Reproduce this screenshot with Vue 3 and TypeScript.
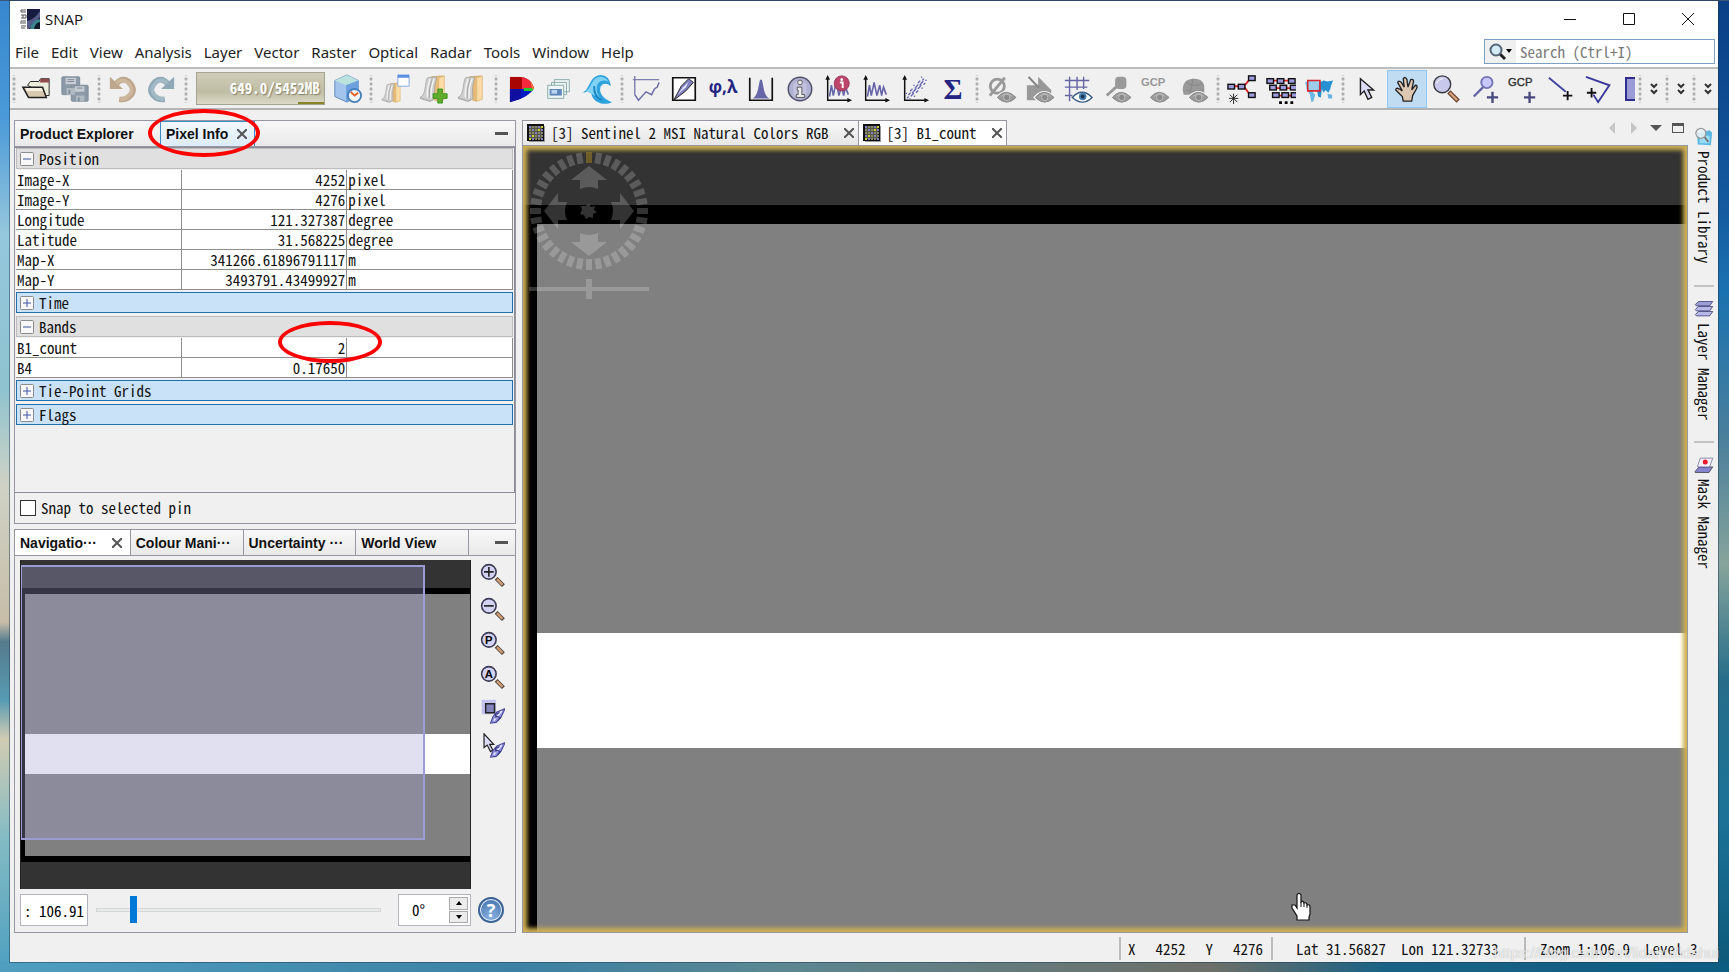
<script setup lang="ts">
import { ref } from 'vue'

const menus = ['File', 'Edit', 'View', 'Analysis', 'Layer', 'Vector', 'Raster', 'Optical', 'Radar', 'Tools', 'Window', 'Help']

const eye = '<path d="M10 25Q20 13 32 25Q21 37 10 25Z" fill="#999" stroke="#f0f0f0" stroke-width="2"/><path d="M11 25Q20 14 31 25Q21 35 11 25Z" fill="#999" stroke="#8c8c8c"/><path d="M15 24Q21 18 27 24" fill="none" stroke="#bbb"/><circle cx="21" cy="25" r="3.400" fill="#8a8a8a" stroke="#c0c0c0"/>'
const axes = '<path d="M5 4V28H28" fill="none" stroke="#111" stroke-width="1.600"/><path d="M2.500 6L5 1l2.500 5zM26 25.500l5 2.500-5 2.500z" fill="#111"/>'
const spectrum = '<path d="M7 24L9 12l2 11 3-14 3 14 3-11 2 11 2-9 3 8" fill="none" stroke="#6565a8" stroke-width="1.700"/>'
const folder = '<path d="M13 3l13-1v25l-6 2-7-3z" fill="#e6bb7a" stroke="#cfa25c" stroke-width=".8"/><path d="M21 4l6-2v25l-6 2z" fill="#fbdca6" stroke="#dbb06c" stroke-width=".7"/><path d="M1 25C8 23 6 8 9 4l10-1q-4 11-2 23l-5 3z" fill="#cfcfcf" stroke="#9c9c9c" stroke-width=".7"/><path d="M9 25q-1-9 3-20M13 26q-1-10 3-21" stroke="#f2f2f2" stroke-width="1.500" fill="none"/><path d="M11 26q-1-10 3-21" stroke="#999" stroke-width=".8" fill="none"/><path d="M1 26l10 3 4-1" stroke="#a8a8a8" fill="none"/>'
const lens = '<path d="M19 19l10 10" stroke="#6b432e" stroke-width="5"/><path d="M20 20l8 8" stroke="#d7a27a" stroke-width="2.500"/><circle cx="12" cy="11" r="9" fill="#c7c8ec" stroke="#393943" stroke-width="1.500"/><path d="M6 10q2-5 7-5" stroke="#fff" fill="none"/>'
const node = (x: number, y: number) => `<rect x="${x}" y="${y}" width="7" height="5" fill="#9d9de0" stroke="#111" stroke-width="1.500"/>`
const arrow = '<path d="M9 5v17l4-4 4 9 4-2-4-8h6z" fill="#dcdcf8" stroke="#222" stroke-width="1.500"/>'

const dots = Array.from({ length: 50 }, (_, i) => {
  const t = i / 50
  return `<rect x="${8 + t * 17 + ((i * 7) % 6) - 2}" y="${23 - t * 18 + ((i * 5) % 8) - 3}" width="1.400" height="1.400"/>`
}).join('')

const icons: Record<string, string> = {
  open: '<path d="M7 12l3-4h9l2-3h9v18h-4z" fill="#ececdc" stroke="#222"/><path d="M21 5h9v4H20z" fill="#914b4d"/><path d="M2 14h21l4 11H8z" fill="#d8c8b0" stroke="#222" stroke-width="1.600"/><path d="M5 15h17l1 3H6z" fill="#f6efe2"/>',
  save: '<g fill="#8c99a7" stroke="#7e8c9a"><rect x="2" y="3" width="19" height="19" rx="1"/><rect x="12" y="12" width="18" height="17" rx="1"/></g><path d="M6 4h11v7H6zM16 13h10v6H16z" fill="#c6ccd1"/><path d="M7 15h9v7H7zM17 23h9v6h-9z" fill="#b0bac3"/><path d="M8 6h7M8 8h7M18 15h6" stroke="#7e8b98"/><path d="M9 17h2v4H9zM19 25h2v4h-2z" fill="#7e8b98"/>',
  undo: '<path d="M8 11Q15 3 22 8q9 9 1 16-4 4-11 3" fill="none" stroke="#bda68b" stroke-width="6"/><path d="M2 3l14 13H2z" fill="#bda68b"/><path d="M9 10Q15 4 21 9q8 8 1 14-4 4-9 4" fill="none" stroke="#ccb69c" stroke-width="4"/>',
  redo: '<path d="M24 11Q17 3 10 8q-9 9-1 16 4 4 11 3" fill="none" stroke="#8fa8b6" stroke-width="6"/><path d="M30 3L16 16h14z" fill="#8fa8b6"/><path d="M23 10Q17 4 11 9q-8 8-1 14 4 4 9 4" fill="none" stroke="#a3bac6" stroke-width="4"/>',
  cube: '<path d="M3 7L16 1l12 6v16l-12 7L3 24z" fill="#a3c4ec" stroke="#5d89bd"/><path d="M3 7l12 5 13-5L16 1z" fill="#bbe2df"/><path d="M15 12v18l13-7V7z" fill="#6da0dc"/><circle cx="24" cy="23" r="7" fill="#f2f5fa" stroke="#457fbd" stroke-width="2"/><path d="M20 19l4 4 4-3" fill="none" stroke="#e66127" stroke-width="2"/>',
  folderWin: `<g transform="translate(1 8) scale(.76)">${folder}</g>` + '<path d="M19 1h12v12H19z" fill="#fff" stroke="#85a9df"/><path d="M19 1h12v3H19z" fill="#5c8fe0"/>',
  folderAdd: folder + '<path d="M20 16h5v5h5v5h-5v5h-5v-5h-5v-5h5z" fill="#5fad2c" stroke="#3f9420"/>',
  folder,
  color: '<clipPath id="dome"><path d="M4 3h10q13 1 16 12Q25 25 4 30z"/></clipPath><g clip-path="url(#dome)"><path d="M0 0h32v16H0z" fill="#a90505"/><path d="M17 0h15v16H17z" fill="#f5283c"/><path d="M0 16h32v18H0z" fill="#0818c5"/><path d="M19 15h13v3H19z" fill="#25c72f"/><path d="M25 5h7v11h-4z" fill="#ef7a3b"/><path d="M0 16h16v14H0z" fill="#1010a0"/></g>',
  stack: '<g fill="#edf5f5" stroke="#86aaa8"><path d="M11 6h16v13H11zM8 9h16v13H8z"/><path d="M4 12h17v14H4z"/></g><path d="M6 16h13v7H6z" fill="#5f86bd"/><path d="M8 17h6v4H8z" fill="#b9d5ef"/>',
  wave: '<path d="M0 20C9 17 7 2 20 1q9 0 11 12-7-5-11 0c-3 8 4 14 12 17-6 3-12 2-17-1C9 25 9 18 11 12q-3 8-11 8z" fill="#2ea2dd"/><path d="M4 18C12 14 9 3 21 3q5 1 7 5-7-3-11 2c-3 6-1 11 3 16" fill="#7fd2f3"/><path d="M13 13q-1 10 8 15" fill="none" stroke="#1784c6" stroke-width="2"/>',
  profile: '<path d="M4 2v20M2 6h28" stroke="#8080b0" stroke-width="1.500"/><path d="M4 22l4 6 8-9 6 3 3-6 3-2 2-5" fill="none" stroke="#6d6da8" stroke-width="1.600"/>',
  pen: '<path d="M4 4h24v24H4z" fill="#fff" stroke="#111" stroke-width="1.800"/><path d="M5 28l8-15 8-8 5 4-8 9z" fill="#7f7fbd" stroke="#222"/><path d="M9 22l9-8 3-6-6 6z" fill="#e5e5fc"/>',
  phi: '<text x="16" y="20" text-anchor="middle" font-family="Open Sans" font-weight="700" font-size="18" fill="#242482">φ,λ</text>',
  hist: '<path d="M4 4v24h24V4" fill="none" stroke="#111" stroke-width="1.800"/><path d="M7 26c6-3 6-13 8-20h2c2 8 2 17 8 20z" fill="#6666a8"/>',
  info: '<circle cx="16" cy="16" r="12.500" fill="#b1b1d3" stroke="#50506c" stroke-width="1.600"/><path d="M9 24V10q7-5 14 1v12" fill="#c9c9e4" opacity=".7"/><circle cx="16" cy="9" r="2.500" fill="#eee" stroke="#555"/><path d="M13 14h5v8h3v3h-9v-3h2v-5h-1z" fill="#eee" stroke="#555"/>',
  pinSpectrum: axes + spectrum + '<circle cx="20" cy="10" r="8" fill="#bd456b" stroke="#943555"/><circle cx="20" cy="6" r="1.500" fill="#fff"/><path d="M18 9h3v6" stroke="#fff" stroke-width="2" fill="none"/>',
  spectrum: axes + spectrum,
  scatter: axes + `<g fill="#6565b0">${dots}</g>`,
  sigma: '<text x="16" y="27" text-anchor="middle" font-family="Liberation Serif" font-weight="700" font-size="31" fill="#242482">Σ</text>',
  eyeNone: '<circle cx="11" cy="13" r="7.500" fill="none" stroke="#999" stroke-width="3"/><path d="M3 23L19 4" stroke="#999" stroke-width="3"/>' + eye,
  eyeShape: '<path d="M4 3l10 9V3l14 14v11H2V12h9L3 4z" fill="#999"/><path d="M4 3l11 12" stroke="#888" stroke-width="2"/>' + eye,
  eyeGrid: '<path d="M7 3v26M15 3v14M22 3v13M2 7h26M2 14h24M2 23h8" stroke="#6666a5" stroke-width="1.500"/><path d="M10 25Q20 14 31 25 21 35 10 25Z" fill="#fff" stroke="#3d5d83" stroke-width="1.500"/><circle cx="21" cy="24" r="4" fill="#477eb1"/><circle cx="21" cy="24" r="2" fill="#16324c"/>',
  eyePin: '<rect x="14" y="3" width="12" height="13" rx="4" fill="#999"/><path d="M15 14L5 23" stroke="#999" stroke-width="3"/>' + eye,
  eyeGcp: '<text x="14" y="13" text-anchor="middle" font-family="Liberation Sans" font-weight="700" font-size="12" fill="#999">GCP</text>' + eye,
  eyeWorld: '<path d="M4 17Q4 5 16 5T27 17v5H5z" fill="#999"/><path d="M8 9q8 6 17 1M8 17q9 4 18 0M15 5l-3 15" stroke="#888" fill="none"/>' + eye,
  graph: '<path d="M5 13h13M18 13l7-8M18 13l7 10" stroke="#da2424" stroke-width="2" fill="none"/>' + node(1, 11) + node(12, 11) + node(23, 2) + node(23, 20) + '<path d="M7 21v11M2 26h10M3 22l8 8M11 22l-8 8" stroke="#222"/>',
  batch: '<path d="M3 7h25M5 15h25M8 23h23" stroke="#dd2323" stroke-width="2"/>' + node(1, 5) + node(12, 5) + node(24, 5) + node(4, 12) + node(15, 12) + node(26, 12) + node(7, 20) + node(17, 20) + node(27, 20) + '<path d="M14 29h3v3h-3zm6 0h3v3h-3zm6 0h3v3h-3z"/>',
  world: '<path d="M1 9l8-3 7 3 2 3-5 5-4 2 3 3-2 7-2 1-2-9-3-4-1-6z" fill="#6db9e6"/><path d="M16 9l5-2 4 1 6-1-2 5-1 4-2 4-3-3-2 3-2-4-1 9-3-1-1-7z" fill="#2590d2"/><path d="M25 21l5 1v4h-4z" fill="#67b5e2"/><path d="M4 7h13v11H4z" fill="#b1d7ed" fill-opacity=".7" stroke="#d62632" stroke-width="1.700"/>',
  select: arrow,
  hand: '<path d="M12 29l-1-5-7-7q0-3 4-1l3 2-5-9q1-3 4 0l3 5-1-9q2-3 4 1l1 8 3-8q3-1 3 2l-2 9 4-5q3 0 1 4l-4 7-1 6z" fill="#ddc7b3" stroke="#222" stroke-width="1.400"/>',
  zoom: lens,
  pin: '<circle cx="18" cy="9" r="6" fill="#c7c7fb" stroke="#7373b7" stroke-width="2"/><path d="M14 14L4 24" stroke="#6464a6" stroke-width="2.500"/><path d="M24 19v12M18 25h12" stroke="#48487f" stroke-width="2.500"/>',
  gcp: '<text x="13" y="13" text-anchor="middle" font-family="Liberation Sans" font-size="12" fill="#333" stroke="#333" stroke-width=".4">GCP</text><path d="M23 19v12M17 25h12" stroke="#48487f" stroke-width="2.500"/>',
  line: '<path d="M2 4l18 15" stroke="#4343a0" stroke-width="2"/><path d="M22 18v10M17 23h10" stroke="#111" stroke-width="2"/>',
  polygon: '<path d="M1 3l25 9-12 18-5-8" fill="none" stroke="#39399b" stroke-width="2"/><path d="M7 15v10M2 20h10" stroke="#111" stroke-width="2"/>',
}

interface Group { items: string[]; memory?: boolean }
const groups: Group[] = [
  { items: ['open', 'save'] },
  { items: ['undo', 'redo'] },
  { items: ['cube'], memory: true },
  { items: ['folderWin', 'folderAdd', 'folder'] },
  { items: ['color', 'stack', 'wave'] },
  { items: ['profile', 'pen', 'phi', 'hist', 'info', 'pinSpectrum', 'spectrum', 'scatter', 'sigma'] },
  { items: ['eyeNone', 'eyeShape', 'eyeGrid', 'eyePin', 'eyeGcp', 'eyeWorld'] },
  { items: ['graph', 'batch', 'world'] },
  { items: ['select', 'hand', 'zoom', 'pin', 'gcp', 'line', 'polygon'] },
]

const sections = [
  { title: 'Position', open: true, rows: [
    ['Image-X', '4252', 'pixel'],
    ['Image-Y', '4276', 'pixel'],
    ['Longitude', '121.327387', 'degree'],
    ['Latitude', '31.568225', 'degree'],
    ['Map-X', '341266.61896791117', 'm'],
    ['Map-Y', '3493791.43499927', 'm'],
  ] },
  { title: 'Time', open: false, rows: [] },
  { title: 'Bands', open: true, rows: [['B1_count', '2', ''], ['B4', '0.17650', '']] },
  { title: 'Tie-Point Grids', open: false, rows: [] },
  { title: 'Flags', open: false, rows: [] },
]

const navTabs = ['Colour Mani···', 'Uncertainty ···', 'World View']
const sync = '<path d="M13 30l3-8 5-6 10-4-5 11-6 6z" fill="#8f8fe0" stroke="#4a4a94" stroke-width="1.300"/><path d="M17 27l10-12" stroke="#e8e8ff" stroke-width="2"/><path d="M19 21l6 2-3 4M24 17l-5 2 1 5" fill="none" stroke="#3a3a86" stroke-width="1.500"/>'
const smallLens = (inner: string) => '<path d="M20 19l9 9" stroke="#4b4038" stroke-width="5"/><path d="M21 20l7 7" stroke="#cf9c75" stroke-width="3"/><circle cx="11" cy="11" r="9" fill="#d3d3f3" stroke="#3c3c55" stroke-width="2"/>' + inner
const navTools = [
  { name: 'Zoom in', art: smallLens('<path d="M11 5v12M5 11h12" stroke="#222" stroke-width="2"/>') },
  { name: 'Zoom out', art: smallLens('<path d="M5 11h12" stroke="#222" stroke-width="2"/>') },
  { name: 'Zoom to actual pixels', art: smallLens('<text x="11" y="16" text-anchor="middle" font-family="Liberation Sans" font-weight="700" font-size="14">P</text>') },
  { name: 'Zoom all', art: smallLens('<text x="11" y="16" text-anchor="middle" font-family="Liberation Sans" font-weight="700" font-size="14">A</text>') },
  { name: 'Synchronise views', art: '<path d="M2 1h18v18H2z" fill="#c3c3ed"/><path d="M7 6h11v11H7z" fill="#8484bd" stroke="#222" stroke-width="1.800"/>' + sync },
  { name: 'Synchronise cursor', art: '<path d="M5 1v17l4-3 4 8 3-2-4-7h5z" fill="#dcdcf8" stroke="#222" stroke-width="1.500"/>' + sync },
]

const sideTabs = [
  { name: 'Product Library', art: '<path d="M5 10l20-5 4 4-2 20-21-1z" fill="#58b6e5"/><path d="M9 14h16v12H9z" fill="#98dbf3"/><path d="M16 15l7 9" stroke="#777" stroke-width="3"/><circle cx="11" cy="10" r="8" fill="#e8f1f5" fill-opacity=".9" stroke="#999" stroke-width="2"/>' },
  { name: 'Layer Manager', art: '<g stroke="#4a4a80" stroke-width="1.400"><path d="M2 25l5-5h23l-5 7H4z" fill="#b8b8e8"/><path d="M2 17l5-5h23l-5 7H4z" fill="#b8b8e8"/><path d="M2 9l5-5h23l-5 7H4z" fill="#9c9cd6"/></g>' },
  { name: 'Mask Manager', art: '<path d="M2 26l6-7h22l-6 9H2z" fill="#8585cf" stroke="#222"/><path d="M6 17l4-12h20l-5 14H6z" fill="#f3f0fc" stroke="#555587"/><circle cx="18" cy="11" r="4" fill="#ed1a2d"/>' },
]

const ticks = Array.from({ length: 36 }, (_, i) => i * 10)
const cellDots = Array.from({ length: 25 }, (_, i) => ({ x: 2 + (i % 5) * 3, y: 2 + Math.floor(i / 5) * 3, c: (i * 7) % 3 === 0 ? '#8484c4' : (i * 5) % 4 === 0 ? '#d2d230' : '#8a8a68' }))

const scale = ref(': 106.91')
const zoomLevel = ref(12)
const rotation = ref('0°')
const snapToPin = ref(false)
const query = ref('')
</script>

<template>
  <div class="desktop">
    <div class="window">
      <header class="titlebar">
        <svg class="logo" viewBox="0 0 20 20">
          <path d="M7 0h13v20H7z" fill="#171b3f" />
          <path d="M7 12Q15 10 20 2v6L9 20H7z" fill="#555b87" />
          <path d="M10 20Q12 11 20 10v10z" fill="#38858b" />
          <path d="M14 20q1-6 6-7v7z" fill="#101a2a" />
          <path d="M1 1h5M1 3h5M1 6h5M3 6v3M1 9h5M1 12h5M2 14h4M1 17h5M1 19h4M1 1v2M6 6v3M1 12v3" stroke="#555" stroke-width="1" />
        </svg>
        <h1>SNAP</h1>
        <div class="win-controls">
          <button aria-label="Minimize"><svg viewBox="0 0 12 12"><path d="M0 6.500h12" /></svg></button>
          <button aria-label="Maximize"><svg viewBox="0 0 12 12"><path d="M.5.5h11v11H.5z" /></svg></button>
          <button aria-label="Close"><svg viewBox="0 0 12 12"><path d="M0 0l12 12M12 0L0 12" /></svg></button>
        </div>
      </header>

      <div class="menubar">
        <nav><button v-for="m in menus" :key="m">{{ m }}</button></nav>
        <label class="search">
          <span class="search-icon">
            <svg viewBox="0 0 24 18"><path d="M11 11l5 5" stroke="#222" stroke-width="3" /><circle cx="7" cy="7" r="5.500" fill="#d5e9f7" stroke="#526578" stroke-width="2" /><path d="M17 6h6l-3 4z" /></svg>
          </span>
          <input v-model="query" type="text" placeholder="Search (Ctrl+I)" aria-label="Search" />
        </label>
      </div>

      <div class="toolbar">
        <template v-for="(g, gi) in groups" :key="gi">
          <span class="grip" :class="{ first: gi === 0 }"></span>
          <div v-if="g.memory" class="memory"><span>649.0/5452MB</span></div>
          <button v-for="i in g.items" :key="i" class="tool" :class="{ active: i === 'hand' }" :aria-label="i">
            <svg viewBox="0 0 32 32" v-html="icons[i]"></svg>
          </button>
        </template>
        <button class="tool clipped" aria-label="rectangle"><svg viewBox="0 0 10 24"><path d="M11 1H1v22h10" fill="#9a9ad6" stroke="#2e2e8c" stroke-width="2" /></svg></button>
        <template v-for="n in 3" :key="'more' + n">
          <span class="grip"></span>
          <button class="more" aria-label="More tools"><svg viewBox="0 0 8 12"><path d="M1 1l3 3 3-3M1 7l3 3 3-3" /></svg></button>
        </template>
      </div>

      <main class="content">
        <div class="left">
          <section class="panel">
            <div class="tabs">
              <button class="tab explorer">Product Explorer</button>
              <button class="tab info">Pixel Info <svg class="x" viewBox="0 0 10 10"><path d="M0 0l10 10M10 0L0 10" /></svg></button>
              <span class="tab-fill"></span>
              <button class="dash" aria-label="Minimize panel"></button>
            </div>
            <div class="info-body">
              <template v-for="s in sections" :key="s.title">
                <button class="section" :class="{ open: s.open }">
                  <svg viewBox="0 0 14 14"><rect x=".5" y=".5" width="13" height="13" rx="1" fill="#f7f7f7" stroke="#8b8b8b" /><path d="M3 7h8" stroke="#3c55a5" /><path v-if="!s.open" d="M7 3v8" stroke="#3c55a5" /></svg>
                  {{ s.title }}
                </button>
                <table v-if="s.rows.length">
                  <tbody>
                    <tr v-for="r in s.rows" :key="r[0]">
                      <td>{{ r[0] }}</td><td class="value">{{ r[1] }}</td><td>{{ r[2] }}</td>
                    </tr>
                  </tbody>
                </table>
              </template>
            </div>
            <label class="snap"><input v-model="snapToPin" type="checkbox" />Snap to selected pin</label>
          </section>

          <section class="panel">
            <div class="tabs">
              <button class="tab nav-tab selected">Navigatio··· <svg class="x" viewBox="0 0 10 10"><path d="M0 0l10 10M10 0L0 10" /></svg></button>
              <button v-for="t in navTabs" :key="t" class="tab nav-tab">{{ t }}</button>
              <button class="dash" aria-label="Minimize panel"></button>
            </div>
            <div class="nav-body">
              <div class="overview">
                <div class="scene">
                  <i class="dark top"></i><i class="black"></i><i class="gray upper"></i><i class="white"></i><i class="gray lower"></i><i class="black"></i><i class="dark bottom"></i>
                </div>
                <div class="viewport"></div>
              </div>
              <div class="nav-tools">
                <button v-for="t in navTools" :key="t.name" :aria-label="t.name"><svg viewBox="0 0 31 31" v-html="t.art"></svg></button>
              </div>
              <div class="nav-controls">
                <input v-model="scale" class="scale" type="text" aria-label="Scale" />
                <input v-model="zoomLevel" class="slider" type="range" min="0" max="100" aria-label="Zoom" />
                <div class="spinner">
                  <input v-model="rotation" type="text" aria-label="Rotation" />
                  <div class="steps">
                    <button aria-label="Increase"><svg viewBox="0 0 6 4"><path d="M0 4h6L3 0z" /></svg></button>
                    <button aria-label="Decrease"><svg viewBox="0 0 6 4"><path d="M0 0h6L3 4z" /></svg></button>
                  </div>
                </div>
              </div>
              <button class="help" aria-label="Help"><span>?</span></button>
            </div>
          </section>
        </div>

        <section class="editor">
          <div class="doc-bar">
            <button class="doc first">
              <svg class="raster" viewBox="0 0 18 18"><path d="M2 2h16v16H2z" fill="#999" /><path d="M0 0h17v17H0z" fill="#111" /><path d="M2 2h13v13H2z" fill="#555548" /><rect v-for="(d, i) in cellDots" :key="i" :x="d.x" :y="d.y" width="2" height="2" :fill="d.c" /></svg>
              <span>[3] Sentinel 2 MSI Natural Colors RGB</span>
              <svg class="x" viewBox="0 0 10 10"><path d="M0 0l10 10M10 0L0 10" /></svg>
            </button>
            <button class="doc selected">
              <svg class="raster" viewBox="0 0 18 18"><path d="M2 2h16v16H2z" fill="#999" /><path d="M0 0h17v17H0z" fill="#111" /><path d="M2 2h13v13H2z" fill="#555548" /><rect v-for="(d, i) in cellDots" :key="i" :x="d.x" :y="d.y" width="2" height="2" :fill="d.c" /></svg>
              <span>[3] B1_count</span>
              <svg class="x" viewBox="0 0 10 10"><path d="M0 0l10 10M10 0L0 10" /></svg>
            </button>
            <div class="doc-controls">
              <button aria-label="Previous"><svg viewBox="0 0 12 14"><path d="M9 1v12L3 7z" fill="#c6c6c6" /></svg></button>
              <button aria-label="Next"><svg viewBox="0 0 12 14"><path d="M3 1v12l6-6z" fill="#c6c6c6" /></svg></button>
              <button aria-label="Document list"><svg viewBox="0 0 12 14"><path d="M0 4h12l-6 6z" fill="#555" /></svg></button>
              <button aria-label="Maximize view"><svg viewBox="0 0 12 14"><path d="M0 2h12v10H0zM1 5v6h10V5z" fill="#555" fill-rule="evenodd" /></svg></button>
            </div>
          </div>
          <div class="canvas">
            <div class="scene">
              <i class="dark top"></i><i class="black"></i><i class="gray upper"></i><i class="white"></i><i class="gray lower"></i>
            </div>
            <svg class="compass" viewBox="0 0 122 160">
              <g fill="#fff" fill-opacity=".2">
                <rect v-for="a in ticks" :key="a" x="58" y="2" width="6" height="11" :transform="`rotate(${a} 61 61)`" :fill="a === 0 ? '#d7a915' : '#fff'" :fill-opacity="a === 0 ? 0.35 : 0.2" />
                <path v-for="a in [0, 90, 180, 270]" :key="'p' + a" d="M61 16L79 30H70v9q-9-4-18 0V30H43z" :transform="`rotate(${a} 61 61)`" />
                <path d="M61 54l2 3 4-1-1 4 3 2-4 2v4l-4-1-3 2-2-4-4-1 2-4-1-4h4z" />
                <path d="M1 137h57v4H1zM64 137h57v4H64z" />
                <path d="M58 129h6v20h-6z" />
              </g>
            </svg>
            <svg class="pointer" viewBox="0 0 20 28"><path d="M6 27v-4l-5-8v-3h3l2 3V2q2-3 4 0v7q2-2 3 1 3-1 3 2 3-1 3 2v7l-1 3v3z" fill="#fff" stroke="#111" stroke-width="1.200" /><path d="M10 9v5M13 10v4M16 12v3" stroke="#111" /></svg>
          </div>
        </section>

        <aside class="sidebar">
          <button v-for="s in sideTabs" :key="s.name"><svg viewBox="0 0 32 32" v-html="s.art"></svg><span>{{ s.name }}</span></button>
        </aside>
      </main>

      <footer class="status">
        <div class="cell xy"><span>X</span><span>4252</span><span>Y</span><span>4276</span></div>
        <div class="cell geo"><span>Lat 31.56827</span><span>Lon 121.32733</span></div>
        <div class="cell level"><span>Zoom 1:106.9</span><span>Level 3</span></div>
      </footer>
    </div>
    <div class="ring tab-ring"></div>
    <div class="ring value-ring"></div>
    <div class="watermark">https://blog.csdn.net/lidahuilidahui</div>
  </div>
</template>

<style>
body { margin: 0; }
</style>

<style scoped>
* { box-sizing: border-box; }
button { padding: 0; border: 0; background: none; color: inherit; font: inherit; }
svg { display: block; flex: none; }
.desktop {
  position: relative; min-height: 100vh; display: flex; padding: 1px 11px 10px 10px; overflow: hidden;
  font: 15px/20px "Noto Sans Mono CJK SC", "Liberation Mono", monospace; color: #111;
  background:
    linear-gradient(90deg, #4f9ec0, #3c81a4 30%, #5b8792 45%, #6d6f68 70%, #1a6285 80%, #0d5c82) bottom / 100% 10px no-repeat,
    linear-gradient(#3a5578, #3a5578) top / 100% 1px no-repeat,
    linear-gradient(#3787cf, #4a99d8 12%, #95c7dd 24%, #8fc3cf 40%, #cfd2c5 50%, #c7bda8 64%, #557b8c 66%, #579ab3 72%, #d1cbb2 76%, #85bcc4 86%, #4d9fc0) left / 10px 100% no-repeat,
    linear-gradient(#0a3f86, #13579c 20%, #1b72b0 30%, #4a7f9c 45%, #86a49b 58%, #276d8a 70%, #1b7397 84%, #0d5879) right / 11px 100% no-repeat,
    #3c81a4;
}
.window { flex: 1; min-width: 0; display: flex; flex-direction: column; background: #f0f0f0; box-shadow: 0 0 0 1px rgba(30, 60, 80, .5); }

.titlebar { height: 35px; display: flex; align-items: center; gap: 5px; padding: 0 1px 0 10px; background: #fff; font-family: "Open Sans", sans-serif; }
.logo { width: 20px; height: 20px; }
h1 { margin: 0; font-size: 15px; line-height: 20px; font-weight: 400; }
.win-controls { margin-left: auto; display: flex; }
.win-controls button { width: 59px; height: 34px; display: grid; place-items: center; }
.win-controls svg { width: 12px; height: 12px; fill: none; stroke: #111; }

.menubar { height: 31px; display: flex; align-items: center; justify-content: space-between; padding: 0 3px 0 5px; background: #fff; }
.menubar nav { display: flex; gap: 12px; font: 15px/20px "Noto Sans", sans-serif; color: #222; }
.search { width: 231px; height: 25px; display: flex; border: 1px solid #7ba0c4; background: #fff; }
.search-icon { width: 31px; display: grid; place-items: center; background: #f0f0f0; }
.search-icon svg { width: 24px; height: 18px; }
.search input { flex: 1; min-width: 0; padding: 0 4px; border: 0; outline: 0; background: none; font: inherit; }
.search input::placeholder { color: #777; opacity: 1; }

.toolbar { height: 43px; display: flex; align-items: center; padding-right: 2px; border-top: 2px solid #bdbdbd; border-bottom: 2px solid #b4b4b4; background: #f0f0f0; }
.grip { flex: none; width: 10px; height: 28px; background: radial-gradient(circle, #aaa 1px, transparent 2px) center / 4px 5px repeat-y; }
.grip.first { width: 7px; }
.tool { flex: 1 1 0; min-width: 0; height: 38px; display: grid; place-items: center; }
.tool svg { width: 30px; height: 30px; }
.tool.active { border: 1px solid #90c8f6; background: #c0dcf3; }
.tool.clipped { flex: none; width: 16px; justify-items: end; }
.tool.clipped svg { width: 10px; height: 24px; }
.more { flex: none; width: 17px; height: 30px; display: grid; place-items: center; }
.more svg { width: 8px; height: 12px; fill: none; stroke: #333; stroke-width: 2; }
.memory { flex: none; width: 129px; height: 33px; margin: 0 3px 0 5px; padding: 5px 4px; border: 1px solid #a5a492; background: linear-gradient(#cfcdb8, #bfbda4 60%, #dcdac8); color: #fff; text-align: right; text-shadow: 1px 1px 1px #85836e; font-weight: 700; position: relative; }
.memory::after { content: ""; position: absolute; right: 0; bottom: 0; width: 26px; height: 2px; background: #8a8428; }

.content { flex: 1; min-height: 0; display: grid; grid-template-columns: minmax(0, 502fr) minmax(0, 1166fr) 24px; gap: 6px; padding: 10px 0 0 4px; }
.left { display: grid; grid-template-rows: minmax(0, 1fr) minmax(0, 1fr); gap: 5px; }
.panel { display: flex; flex-direction: column; min-height: 0; border: 1px solid #9697a2; }
.tabs { height: 26px; flex: none; display: flex; border-bottom: 1px solid #9697a2; background: linear-gradient(#f8f8f8, #e9e9e9); font: 700 14px/24px "Liberation Sans", sans-serif; }
.tab { display: flex; align-items: center; padding: 0 5px; white-space: nowrap; text-align: left; }
.tab .x { margin-left: auto; }
.x { width: 10px; height: 10px; stroke: #555; stroke-width: 2; fill: none; }
.explorer { width: 29%; }
.info { width: 19%; padding-right: 7px; border: solid #3a8bc2; border-width: 1px 1px 0; background: linear-gradient(#f3f9ff, #dcebfa); }
.tab-fill { flex: 1; }
.dash { width: 46px; display: flex; align-items: center; justify-content: flex-end; padding-right: 7px; }
.dash::before { content: ""; width: 13px; height: 3px; background: #555; }
.nav-tab { flex: 1 1 0; min-width: 0; border-right: 1px solid #9697a2; }
.nav-tab.selected { background: #fff; padding-right: 8px; }

.info-body { flex: 1; min-height: 0; display: flex; flex-direction: column; padding: 0 1px; border: solid #8b8c97; border-width: 1px 1px 1px 0; }
.section { height: 21px; flex: none; display: flex; align-items: center; gap: 5px; margin-bottom: 3px; padding: 0 3px; border: 1px solid #2070ae; background: #cae2f7; text-align: left; line-height: 18px; }
.section.open { border-color: #bcbcbc; background: #e0e0e0; margin-bottom: 1px; }
.section svg { width: 14px; height: 14px; }
table { flex: none; width: 100%; margin-bottom: 2px; table-layout: fixed; border-collapse: separate; border-spacing: 0; background: #fff; }
td { height: 20px; padding: 0 1px; border: solid #8e8e8e; border-width: 0 1px 1px 0; line-height: 18px; }
.value { text-align: right; }
.snap { height: 30px; flex: none; display: flex; align-items: center; gap: 5px; padding-left: 5px; }
.snap input { appearance: none; width: 16px; height: 16px; margin: 0; border: 1px solid #333; background: #fff; }

.nav-body { flex: 1; min-height: 0; display: grid; grid-template-columns: minmax(0, 1fr) 44px; grid-template-rows: minmax(0, 1fr) 32px; row-gap: 5px; padding: 4px 0 6px 5px; }
.overview { position: relative; min-height: 0; border-left: 1px solid #222; border-right: 1px solid #222; background: #000; }
.scene { height: 100%; display: flex; flex-direction: column; }
.scene i { display: block; flex: none; }
.dark { background: #333; }
.black { background: #000; }
.gray { background: #808080; }
.white { background: #fff; }
.overview .top { height: 28px; }
.overview .black { height: 6px; }
.overview .upper { flex: 141 1 0; margin-left: 4px; }
.overview .white { flex: 40 1 0; margin-left: 4px; }
.overview .lower { flex: 82 1 0; margin-left: 4px; }
.overview .bottom { height: 27px; }
.viewport { position: absolute; left: 0; top: 5px; width: 90%; bottom: 49px; border: 2px solid #9c9cd2; border-left-width: 1px; background: rgba(160, 160, 210, .33); }
.nav-tools { display: flex; flex-direction: column; align-items: center; padding-top: 3px; }
.nav-tools button { width: 26px; height: 34px; display: flex; align-items: flex-start; }
.nav-tools svg { width: 25px; height: 25px; }
.nav-controls { display: flex; justify-content: space-between; }
.scale { width: 68px; height: 32px; padding: 0 3px; border: 1px solid #b3b4bd; background: #fff; font: inherit; }
.slider { appearance: none; flex: 1; min-width: 0; margin: 0 17px 0 8px; background: none; }
.slider::-webkit-slider-runnable-track { height: 4px; border: 1px solid #d6d6d6; background: #e7eaea; }
.slider::-webkit-slider-thumb { appearance: none; width: 7px; height: 27px; margin-top: -13px; background: #0078d7; }
.spinner { width: 73px; height: 32px; display: flex; padding: 2px; border: 1px solid #b3b4bd; background: #fff; }
.spinner input { flex: 1; min-width: 0; padding: 0 0 0 11px; border: 0; background: none; font: inherit; }
.steps { width: 19px; display: grid; grid-template-rows: 1fr 1fr; gap: 1px; }
.steps button { display: grid; place-items: center; border: 1px solid #aaa; background: #ececec; }
.steps svg { width: 6px; height: 4px; }
.help { width: 26px; height: 26px; margin: 3px 0 0 7px; border: 2px solid #3c6495; border-radius: 50%; background: radial-gradient(circle at 50% 80%, #89b2df, #3c6ba9); box-shadow: inset 0 0 0 1px #e5edf7; color: #fff; font: 700 18px/22px "Open Sans", sans-serif; }

.editor { min-width: 0; display: flex; flex-direction: column; }
.doc-bar { height: 25px; flex: none; display: flex; }
.doc { display: flex; align-items: center; border: 1px solid #9697a2; border-bottom: 0; padding: 0 4px; background: linear-gradient(#f8f8f8, #e6e6e6); white-space: nowrap; }
.doc.first { border-right: 0; }
.doc.selected { background: #fff; }
.doc span { margin: 0 15px 0 6px; }
.raster { width: 18px; height: 18px; }
.doc-controls { margin-left: auto; display: flex; gap: 10px; padding: 1px 4px 0 0; }
.doc-controls button { display: flex; }
.doc-controls svg { width: 12px; height: 14px; }
.canvas { position: relative; flex: 1; min-height: 0; border: 1px solid #9697a2; background: #000; }
.canvas::after { content: ""; position: absolute; inset: 0; box-shadow: inset 0 0 4px 4px #ceb052; }
.canvas .top { height: 59px; }
.canvas .black { height: 19px; }
.canvas .upper { flex: 409 1 0; margin-left: 14px; }
.canvas .white { flex: 115 1 0; margin-left: 14px; }
.canvas .lower { flex: 184 1 0; margin-left: 14px; }
.compass { position: absolute; left: 5px; top: 4px; width: 122px; height: 160px; }
.pointer { position: absolute; left: 66%; bottom: 11px; width: 20px; height: 28px; }

.sidebar { display: flex; flex-direction: column; padding: 7px 4px 0 0; }
.sidebar button { display: flex; flex-direction: column; align-items: center; padding-bottom: 21px; border-bottom: 2px solid #c4c4c4; margin-bottom: 12px; }
.sidebar button:last-child { border: 0; }
.sidebar svg { width: 20px; height: 20px; margin-bottom: 4px; }
.sidebar span { writing-mode: vertical-rl; line-height: 20px; }

.status { height: 29px; flex: none; display: flex; justify-content: flex-end; padding: 4px 0 2px; }
.cell { display: flex; align-items: center; border-left: 2px solid #bbb; white-space: pre; }
.xy { width: 152px; padding: 0 8px 0 7px; justify-content: space-between; }
.geo { width: 253px; padding-left: 23px; gap: 15px; }
.level { width: 194px; padding-left: 14px; gap: 15px; }

.ring { position: absolute; border: 4px solid #f00; border-radius: 50%; }
.tab-ring { left: 148px; top: 109px; width: 112px; height: 48px; }
.value-ring { left: 278px; top: 321px; width: 104px; height: 42px; }
.watermark { position: absolute; right: 10px; bottom: 9px; font: 15px/20px "Liberation Sans", sans-serif; color: rgba(255, 255, 255, .75); text-shadow: 0 0 1px rgba(120, 120, 120, .6); }
</style>
